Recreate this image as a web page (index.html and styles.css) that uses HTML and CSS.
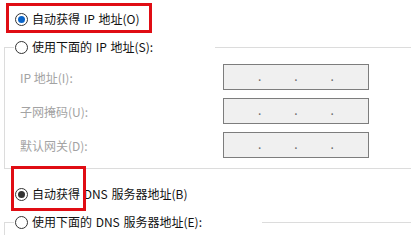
FILE: index.html
```html
<!DOCTYPE html>
<html lang="zh-CN">
<head>
<meta charset="utf-8">
<title>IP 设置</title>
<link rel="stylesheet" href="styles.css">
</head>
<body>
<div class="page">
  <div class="opt opt-auto-ip">
    <span class="radio checked blue"></span><span class="lbl">自动获得 IP 地址(O)</span>
    <span class="mark mark-ip"></span>
  </div>

  <fieldset class="group group-ip">
    <legend class="legend legend-ip"><span class="radio"></span><span class="lbl">使用下面的 IP 地址(S):</span></legend>
    <div class="fields">
      <span class="flabel">IP 地址(I):</span>
      <span class="ipbox"><span class="seg"></span><span class="dot">.</span><span class="seg"></span><span class="dot">.</span><span class="seg"></span><span class="dot">.</span><span class="seg"></span></span>
      <span class="flabel">子网掩码(U):</span>
      <span class="ipbox"><span class="seg"></span><span class="dot">.</span><span class="seg"></span><span class="dot">.</span><span class="seg"></span><span class="dot">.</span><span class="seg"></span></span>
      <span class="flabel">默认网关(D):</span>
      <span class="ipbox"><span class="seg"></span><span class="dot">.</span><span class="seg"></span><span class="dot">.</span><span class="seg"></span><span class="dot">.</span><span class="seg"></span></span>
    </div>
  </fieldset>

  <div class="opt opt-auto-dns">
    <span class="radio checked"></span><span class="lbl">自动获得 DNS 服务器地址(B)</span>
    <span class="mark mark-dns"></span>
  </div>

  <fieldset class="group group-dns">
    <legend class="legend legend-dns"><span class="radio"></span><span class="lbl">使用下面的 DNS 服务器地址(E):</span></legend>
  </fieldset>
</div>
</body>
</html>
```

FILE: styles.css
```css
html, body {
  margin: 0;
  padding: 0;
  background: #ffffff;
}

body {
  width: 411px;
  height: 235px;
  overflow: hidden;
  font-family: "Microsoft YaHei", "Noto Sans CJK SC", "Noto Sans", sans-serif;
  font-size: 12px;
  color: #111111;
}

.page {
  display: flex;
  flex-direction: column;
}

.opt {
  position: relative;
  display: flex;
  align-items: center;
  gap: 4px;
  height: 22px;
  padding-left: 15px;
}

.opt-auto-ip {
  margin-top: 8px;
}

.opt-auto-dns {
  margin-top: 14px;
}

.lbl {
  white-space: nowrap;
  line-height: 1;
  word-spacing: 1px;
}

.radio {
  width: 13px;
  height: 13px;
  box-sizing: border-box;
  border: 1px solid #333333;
  border-radius: 50%;
  display: inline-flex;
  align-items: center;
  justify-content: center;
  flex: none;
  background: #ffffff;
}

.radio.checked::after {
  content: "";
  width: 7px;
  height: 7px;
  border-radius: 50%;
  background: #333333;
}

.radio.blue::after {
  background: #0a64c8;
}

/* red annotation frames drawn over the screenshot */
.mark {
  position: absolute;
  box-sizing: border-box;
  border: 3px solid #e00d14;
  pointer-events: none;
}

.mark-ip {
  left: 6px;
  top: -5px;
  width: 146px;
  height: 30px;
}

.mark-dns {
  left: 11px;
  top: -17px;
  width: 75px;
  height: 45px;
}

.group {
  margin: 7px 0 0 4px;
  padding: 7px 0 10px 9px;
  border: 1px solid #dcdcdc;
  border-right: 0;
  min-inline-size: 0;
}

.group-dns {
  padding-bottom: 40px;
}

.legend {
  display: flex;
  align-items: center;
  gap: 4px;
  height: 20px;
  padding: 0 0 0 1px;
  margin: 0;
  box-sizing: border-box;
}

.legend-ip {
  width: 201px;
}

.legend-dns {
  width: 248px;
}

.fields {
  display: grid;
  grid-template-columns: 203px 146px;
  grid-auto-rows: 26px;
  row-gap: 8px;
  align-items: center;
  padding-left: 6px;
}

.flabel {
  color: #a3a3a3;
  white-space: nowrap;
}

.ipbox {
  display: flex;
  align-items: center;
  height: 26px;
  box-sizing: border-box;
  border: 1px solid #7d7d7d;
  background: #f0f0f0;
}

.seg {
  flex: 1;
}

.dot {
  width: 1px;
  display: flex;
  justify-content: center;
  color: #6a6a6a;
  font-size: 12px;
  line-height: 1;
  margin-top: -2px;
}
```
